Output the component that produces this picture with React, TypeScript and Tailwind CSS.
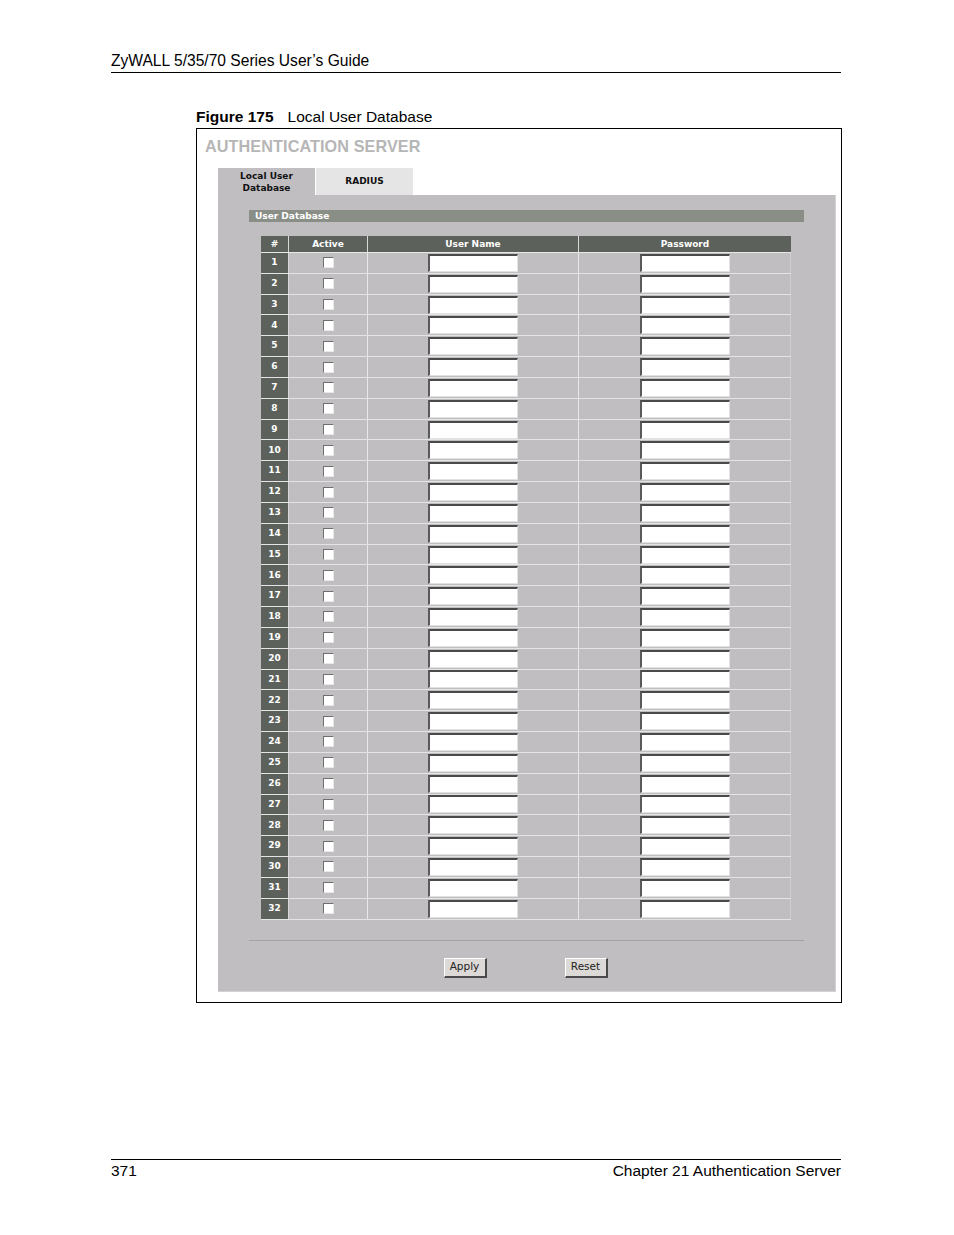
import React from "react";

const rows = Array.from({ length: 32 }, (_, i) => i + 1);

function Checkbox() {
  return (
    <div className="w-[11px] h-[11px] bg-white border-t border-l border-[#6f6f6f] border-b border-r border-b-[#e8e8e8] border-r-[#e8e8e8]" />
  );
}

function TextInput() {
  return (
    <div className="w-[90px] h-[18px] bg-white border-t-2 border-l-2 border-b border-r border-t-[#4a4a4a] border-l-[#5a5a5a] border-b-[#e2e2e2] border-r-[#e2e2e2]" />
  );
}

function Btn({ label }: { label: string }) {
  return (
    <div className="w-[43px] h-[20px] bg-[#dcd9d6] border-t border-l border-white border-b-2 border-r-2 border-b-[#4a4a4a] border-r-[#4a4a4a] flex items-center justify-center text-[10.5px] text-[#222] font-['DejaVu_Sans',sans-serif]">
      {label}
    </div>
  );
}

export default function App() {
  return (
    <div className="w-[954px] h-[1235px] bg-white text-black font-['Liberation_Sans',Arial,sans-serif] flex flex-col">
      <div className="pt-[52px] ml-[111px] w-[730px]">
        <div className="h-[21px] border-b border-black text-[15.6px] leading-[17px]">
          ZyWALL 5/35/70 Series User’s Guide
        </div>
      </div>

      <div className="ml-[196px] mt-[35px] h-[17px] text-[15.5px] leading-[17px] flex">
        <span className="font-bold">Figure 175</span>
        <span className="ml-[14px]">Local User Database</span>
      </div>

      <div className="ml-[196px] mt-[3px] w-[646px] h-[875px] border border-black flex flex-col">
        <div className="pl-[8px] pt-[8px] h-[39px] text-[16.2px] leading-[18px] font-bold text-[#b6b6b6] tracking-[0.1px]">
          AUTHENTICATION SERVER
        </div>

        <div className="ml-[21px] flex h-[27px]">
          <div className="w-[97px] bg-[#c1bec2] flex flex-col items-center justify-center font-['DejaVu_Sans',sans-serif] font-bold text-[9px] leading-[12px] text-[#111]">
            <span>Local User</span>
            <span>Database</span>
          </div>
          <div className="w-[97px] ml-[1px] bg-[#e6e5e6] flex items-center justify-center font-['DejaVu_Sans',sans-serif] font-bold text-[9px] text-[#111]">
            RADIUS
          </div>
        </div>

        <div className="ml-[21px] w-[618px] h-[797px] bg-[#c1bec2] border-r border-b border-[#d4d2d5] flex flex-col font-['DejaVu_Sans',sans-serif]">
          <div className="mt-[15px] ml-[31px] w-[555px] h-[12px] bg-[#898e87] text-white font-bold text-[9px] leading-[12px] pl-[6px]">
            User Database
          </div>

          <div className="mt-[14px] ml-[43px] w-[530px] flex flex-col">
            <div className="grid grid-cols-[28px_79px_211px_212px] h-[17px] bg-[#5c615b] text-white text-[9px] font-bold leading-[16px] border-b border-[#e8e8e8]">
              <div className="text-center border-r border-[#d8d8d8]">#</div>
              <div className="text-center border-r border-[#d8d8d8]">Active</div>
              <div className="text-center border-r border-[#d8d8d8]">User Name</div>
              <div className="text-center">Password</div>
            </div>
            {rows.map((n) => (
              <div
                key={n}
                className="grid grid-cols-[28px_79px_211px_212px] h-[20.84px] border-b border-[#e4e3e5]"
              >
                <div className="bg-[#5c615b] text-white text-[9px] font-bold flex items-center justify-center border-r border-[#d8d8d8]">
                  {n}
                </div>
                <div className="flex items-center justify-center border-r border-[#e8e8e8]">
                  <Checkbox />
                </div>
                <div className="flex items-center justify-center border-r border-[#e8e8e8]">
                  <TextInput />
                </div>
                <div className="flex items-center justify-center border-r border-[#cfcdd0]">
                  <TextInput />
                </div>
              </div>
            ))}
          </div>

          <div className="mt-[20px] ml-[31px] w-[555px] border-t border-[#a4a2a6]" />

          <div className="mt-[17px] flex justify-center gap-[78px] pr-[2px]">
            <Btn label="Apply" />
            <Btn label="Reset" />
          </div>
        </div>
      </div>

      <div className="mt-[156px] ml-[111px] w-[730px] border-t border-black flex justify-between text-[15.5px] leading-[17px] pt-[2px]">
        <span>371</span>
        <span>Chapter 21 Authentication Server</span>
      </div>
    </div>
  );
}
